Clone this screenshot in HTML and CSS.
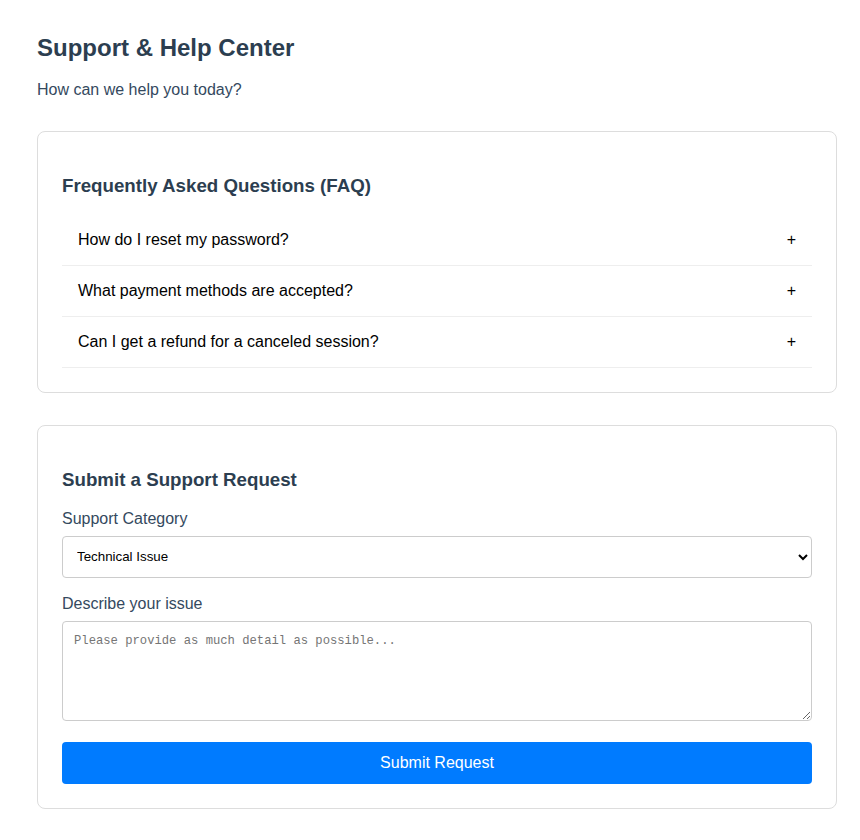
FILE: index.html
```html
<!DOCTYPE html>
<html lang="en">
<head>
<meta charset="utf-8">
<title>Support & Help Center</title>
<link rel="stylesheet" href="styles.css">
</head>
<body>
<div class="page">
  <h1 class="title">Support &amp; Help Center</h1>
  <p class="subtitle">How can we help you today?</p>

  <section class="card">
    <h3 class="card-title">Frequently Asked Questions (FAQ)</h3>
    <div class="faq-list">
      <div class="faq-item"><span>How do I reset my password?</span><span class="plus">+</span></div>
      <div class="faq-item"><span>What payment methods are accepted?</span><span class="plus">+</span></div>
      <div class="faq-item"><span>Can I get a refund for a canceled session?</span><span class="plus">+</span></div>
    </div>
  </section>

  <section class="card">
    <h3 class="card-title">Submit a Support Request</h3>
    <form class="form">
      <div class="field">
        <label class="label" for="cat">Support Category</label>
        <select id="cat" class="select">
          <option>Technical Issue</option>
          <option>Billing</option>
          <option>Account</option>
        </select>
      </div>
      <div class="field">
        <label class="label" for="desc">Describe your issue</label>
        <textarea id="desc" class="textarea" placeholder="Please provide as much detail as possible..."></textarea>
      </div>
      <button type="button" class="submit">Submit Request</button>
    </form>
  </section>
</div>
</body>
</html>
```

FILE: styles.css
```css
html, body {
  margin: 0;
  padding: 0;
  background: #fff;
}
body {
  font-family: "Liberation Sans", Arial, sans-serif;
  color: #333;
}
.page {
  width: 800px;
  padding: 20px 0 20px 37px;
}
.title {
  font-size: 24px;
  font-weight: bold;
  color: #2c3e50;
  margin: 14px 0 0;
  line-height: 28px;
}
.subtitle {
  font-size: 16px;
  color: #34495e;
  margin: 19px 0 0;
  line-height: 18px;
}
.card {
  border: 1px solid #ddd;
  border-radius: 8px;
  padding: 24px;
  margin-top: 32px;
  background: #fff;
}
.card-title {
  font-size: 18.72px;
  font-weight: bold;
  color: #2c3e50;
  margin: 18.72px 0;
  line-height: 22px;
}
.faq-item {
  display: flex;
  justify-content: space-between;
  align-items: center;
  padding: 15px 16px;
  height: 20px;
  border-bottom: 1px solid #eee;
  font-size: 16px;
  color: #000;
}
.plus {
  font-size: 16px;
  color: #000;
}
.field {
  display: flex;
  flex-direction: column;
  margin-bottom: 17px;
}
.label {
  font-size: 16px;
  color: #34495e;
  line-height: 18px;
  margin: 0 0 8px;
}
.select {
  height: 42px;
  box-sizing: border-box;
  border: 1px solid #ccc;
  border-radius: 4px;
  padding: 0 10px;
  font-family: "Liberation Sans", Arial, sans-serif;
  font-size: 13.33px;
  color: #000;
  background: #fff;
}
.textarea {
  height: 100px;
  box-sizing: border-box;
  border: 1px solid #ccc;
  border-radius: 4px;
  padding: 12px 11px 10px;
  font-family: "Liberation Mono", monospace;
  font-size: 12.2px;
  resize: vertical;
}
.textarea::placeholder {
  color: #757575;
}
.submit {
  display: block;
  width: 100%;
  height: 42px;
  margin-top: 21px;
  border: none;
  border-radius: 4px;
  background: #007bff;
  color: #fff;
  font-family: "Liberation Sans", Arial, sans-serif;
  font-size: 16px;
}
```
